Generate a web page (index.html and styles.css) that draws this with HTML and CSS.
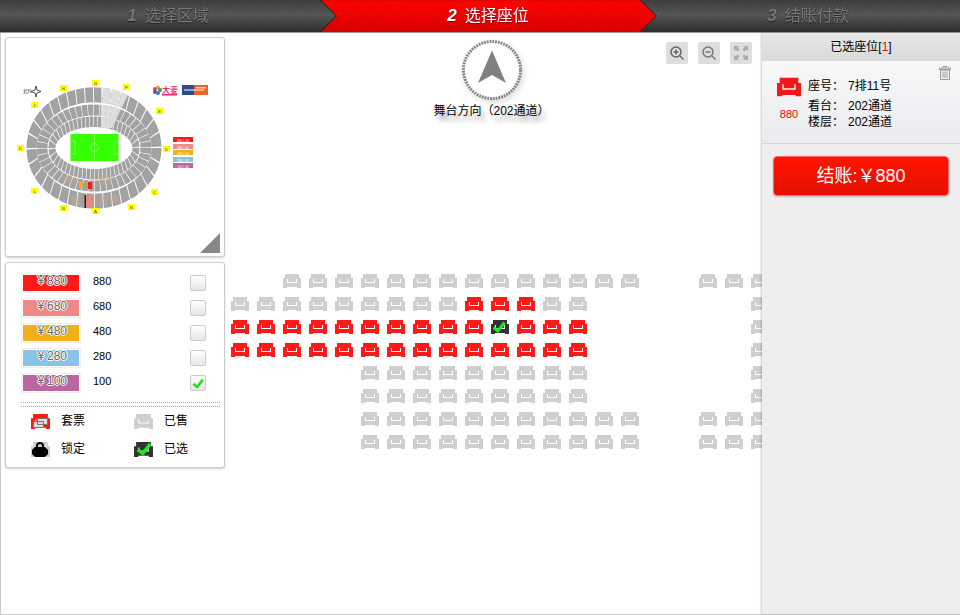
FILE: index.html
```html
<!DOCTYPE html>
<html lang="zh">
<head>
    <meta charset="UTF-8">
    <title>选择座位</title>
    <link rel="stylesheet" href="styles.css">
</head>
<body>
<svg class="defs" width="0" height="0">
    <symbol id="s" viewBox="0 0 18 14">
        <path fill-rule="evenodd" d="M2 0H16V4H18V14H14V13H4V14H0V4H2ZM4 5V9H14V5H13V8H5V5Z"/>
    </symbol>
    <symbol id="chk" viewBox="0 0 14 12">
        <path fill="none" stroke="#1ee61e" stroke-width="3" d="M1.500 6.500L6 10L12.500 1.500"/>
    </symbol>
</svg>

<div class="steps">
    <div class="step step-1"><div class="step-in"><b>1</b>选择区域</div></div>
    <div class="step step-2"><div class="step-in"><b>2</b>选择座位</div></div>
    <div class="step step-3"><div class="step-in"><b>3</b>结账付款</div></div>
</div>

<div class="main">
    <div class="side">
        <div class="card map-card">
            <svg class="stadium" viewBox="6 38 218 218" width="218" height="218">
                <defs>
                    <g id="rings" fill="none">
                        <g transform="translate(94 148) scale(1 1.5)">
                            <ellipse rx="62.5" ry="35.5" stroke-width="10" pathLength="72" stroke-dasharray="1.8 .2"/>
                            <ellipse rx="42" ry="17.5" stroke-width="7" pathLength="96" stroke-dasharray="1.7 .3"/>
                        </g>
                        <ellipse cx="94" cy="148" rx="52" ry="38" stroke-width="11" pathLength="96" stroke-dasharray="1.8 .2"/>
                    </g>
                    <clipPath id="wedge"><polygon points="101,80 135,80 112,128 101,128"/></clipPath>
                </defs>
                <use href="#rings" stroke="#a2a2a2"/>
                <use href="#rings" stroke="#dedede" clip-path="url(#wedge)"/>
                <rect x="70.5" y="134" width="48" height="27" fill="#35ff00"/>
                <g fill="none" stroke="#c8f8b0" stroke-width=".5">
                    <path d="M94.500 134V161M70.500 141H75V154H70.500M118.500 141H114V154H118.500"/>
                    <circle cx="94.500" cy="147.500" r="4"/>
                </g>
                <g fill="#c9a98a" opacity=".4">
                    <rect x="66" y="175" width="6" height="9"/><rect x="98" y="176" width="7" height="9"/>
                    <rect x="106" y="175" width="6" height="9"/><rect x="72" y="196" width="8" height="9"/>
                    <rect x="100" y="196" width="8" height="10"/><rect x="110" y="195" width="8" height="9"/>
                </g>
                <rect x="79" y="182" width="4" height="6" fill="#efb01a"/>
                <rect x="88" y="182" width="4" height="7" fill="#ff1a1a"/>
                <rect x="85" y="195" width="9" height="13" fill="#e58a80"/>
                <rect x="84.500" y="195" width="1.500" height="13" fill="#222"/>

                <g class="tags">
                    <rect x="92" y="80" width="7" height="6"/><rect x="60" y="85" width="7" height="6"/>
                    <rect x="123" y="84" width="7" height="6"/><rect x="31" y="102" width="7" height="6"/>
                    <rect x="156" y="108" width="7" height="6"/><rect x="17" y="145" width="7" height="6"/>
                    <rect x="163" y="146" width="7" height="6"/><rect x="31" y="188" width="7" height="6"/>
                    <rect x="151" y="189" width="7" height="6"/><rect x="60" y="205" width="7" height="6"/>
                    <rect x="92" y="208" width="7" height="6"/><rect x="128" y="204" width="7" height="6"/>
                </g>
                <g class="tag-text">
                    <text x="95.500" y="85">G</text><text x="63.500" y="90">H</text><text x="126.500" y="89">F</text>
                    <text x="34.500" y="107">J</text><text x="159.500" y="113">E</text><text x="20.500" y="150">K</text>
                    <text x="166.500" y="151">D</text><text x="34.500" y="193">L</text><text x="154.500" y="194">C</text>
                    <text x="63.500" y="210">B</text><text x="95.500" y="213">A</text><text x="131.500" y="209">B</text>
                </g>

                <path d="M36 86L37 90L41 91.500L37 93L36 97L35 93L31 91.500L35 90Z" fill="#fff" stroke="#222" stroke-width=".8"/>
                <text class="north" x="23" y="93">北N</text>

                <g>
                    <circle cx="155" cy="89" r="2" fill="#e83070"/><circle cx="158" cy="87.500" r="2" fill="#f0a020"/>
                    <circle cx="160" cy="90" r="2" fill="#40a040"/><circle cx="155" cy="92" r="2" fill="#8040b0"/>
                    <circle cx="158" cy="93" r="2" fill="#2080d0"/>
                </g>
                <text class="damai" x="162" y="93">大麦</text>
                <rect x="162" y="94" width="15" height="1.500" fill="#e83070"/>
                <rect x="182" y="85" width="12" height="10" fill="#2c4a8c"/>
                <rect x="194" y="85" width="14" height="10" fill="#f0622a"/>
                <rect x="196" y="87" width="10" height="1.500" fill="#fff" opacity=".7"/>
                <rect x="184" y="89" width="20" height="2" fill="#fff" opacity=".5"/>

                <g class="mini">
                    <rect x="173" y="137" width="20" height="5" fill="#ff1a1a"/>
                    <rect x="173" y="144" width="20" height="5" fill="#f08888"/>
                    <rect x="173" y="150" width="20" height="5" fill="#efb01a"/>
                    <rect x="173" y="157" width="20" height="5" fill="#8ac4e4"/>
                    <rect x="173" y="163" width="20" height="5" fill="#bb66a0"/>
                </g>
                <g class="mini-text">
                    <text x="183" y="141.500">880.00</text><text x="183" y="148.500">680.00</text>
                    <text x="183" y="154.500">480.00</text><text x="183" y="161.500">280.00</text>
                    <text x="183" y="167.500">100.00</text>
                </g>
                <path d="M200 253L220 233V253Z" fill="#888"/>
            </svg>
        </div>

        <div class="card legend-card">
            <div class="price-row">
                <span class="swatch c880">￥880</span><span class="price">880</span><span class="box"></span>
            </div>
            <div class="price-row">
                <span class="swatch c680">￥680</span><span class="price">680</span><span class="box"></span>
            </div>
            <div class="price-row">
                <span class="swatch c480">￥480</span><span class="price">480</span><span class="box"></span>
            </div>
            <div class="price-row">
                <span class="swatch c280">￥280</span><span class="price">280</span><span class="box"></span>
            </div>
            <div class="price-row">
                <span class="swatch c100">￥100</span><span class="price">100</span>
                <span class="box"><svg class="box-chk"><use href="#chk"/></svg></span>
            </div>
            <div class="dots"></div>
            <div class="key">
                <div class="key-item">
                    <span class="key-icon">
                        <svg class="seat red"><use href="#s"/></svg>
                        <svg class="tickets" viewBox="0 0 15 10"><path d="M4.500 .5H14.500V6.500H4.500ZM.5 3.500H10.500V9.500H.5Z" fill="#ddd" stroke="#777"/></svg>
                    </span>套票
                </div>
                <div class="key-item">
                    <span class="key-icon"><svg class="seat"><use href="#s"/></svg></span>已售
                </div>
                <div class="key-item">
                    <span class="key-icon">
                        <svg class="seat"><use href="#s"/></svg>
                        <svg class="lock" viewBox="0 0 16 16"><path d="M5 7V5A3 3 0 0 1 11 5V7" fill="none" stroke="#000" stroke-width="2"/><path d="M3 6H13L16 9V13L13 16H3L0 13V9Z"/></svg>
                    </span>锁定
                </div>
                <div class="key-item">
                    <span class="key-icon">
                        <svg class="seat on"><use href="#s"/></svg>
                        <svg class="key-chk"><use href="#chk"/></svg>
                    </span>已选
                </div>
            </div>
        </div>
    </div>

    <div class="canvas">
        <div class="tools">
            <span class="tool"><svg viewBox="0 0 16 16"><circle cx="7" cy="7" r="5" fill="none" stroke="#666" stroke-width="1.500"/><path d="M4.500 7H9.500M7 4.500V9.500M10.500 10.500L14.500 14.500" stroke="#666" stroke-width="1.500"/></svg></span>
            <span class="tool"><svg viewBox="0 0 16 16"><circle cx="7" cy="7" r="5" fill="none" stroke="#777" stroke-width="1.500"/><path d="M4.500 7H9.500M10.500 10.500L14.500 14.500" stroke="#777" stroke-width="1.500"/></svg></span>
            <span class="tool"><svg viewBox="0 0 16 16"><path d="M1 1H6L4.500 2.500L6.500 4.500L4.500 6.500L2.500 4.500L1 6ZM15 1V6L13.500 4.500L11.500 6.500L9.500 4.500L11.500 2.500L10 1ZM1 15V10L2.500 11.500L4.500 9.500L6.500 11.500L4.500 13.500L6 15ZM15 15H10L11.500 13.500L9.500 11.500L11.500 9.500L13.500 11.500L15 10Z" fill="#aaa"/></svg></span>
        </div>

        <div class="stage">
            <svg class="compass" viewBox="0 0 64 64" width="64" height="64">
                <circle cx="32" cy="32" r="28.500" fill="#fff" stroke="#808080" stroke-width="3" stroke-dasharray="1.800 1"/>
                <path d="M32 12.500L46 45L32 37L18 45Z" fill="#808080"/>
            </svg>
            <div class="stage-name">舞台方向（202通道）</div>
        </div>

        <div class="seats">
            <i class="skip2"></i>
            <svg class="seat"><use href="#s"/></svg><svg class="seat"><use href="#s"/></svg><svg class="seat"><use href="#s"/></svg><svg class="seat"><use href="#s"/></svg><svg class="seat"><use href="#s"/></svg><svg class="seat"><use href="#s"/></svg><svg class="seat"><use href="#s"/></svg>
            <svg class="seat"><use href="#s"/></svg><svg class="seat"><use href="#s"/></svg><svg class="seat"><use href="#s"/></svg><svg class="seat"><use href="#s"/></svg><svg class="seat"><use href="#s"/></svg><svg class="seat"><use href="#s"/></svg><svg class="seat"><use href="#s"/></svg>
            <i class="skip2"></i>
            <svg class="seat"><use href="#s"/></svg><svg class="seat"><use href="#s"/></svg><svg class="seat"><use href="#s"/></svg>

            <svg class="seat"><use href="#s"/></svg><svg class="seat"><use href="#s"/></svg><svg class="seat"><use href="#s"/></svg><svg class="seat"><use href="#s"/></svg><svg class="seat"><use href="#s"/></svg><svg class="seat"><use href="#s"/></svg><svg class="seat"><use href="#s"/></svg>
            <svg class="seat"><use href="#s"/></svg><svg class="seat"><use href="#s"/></svg>
            <svg class="seat red"><use href="#s"/></svg><svg class="seat red"><use href="#s"/></svg><svg class="seat red"><use href="#s"/></svg>
            <svg class="seat"><use href="#s"/></svg><svg class="seat"><use href="#s"/></svg>
            <i class="skip6"></i>
            <svg class="seat"><use href="#s"/></svg>

            <svg class="seat red"><use href="#s"/></svg><svg class="seat red"><use href="#s"/></svg><svg class="seat red"><use href="#s"/></svg><svg class="seat red"><use href="#s"/></svg><svg class="seat red"><use href="#s"/></svg><svg class="seat red"><use href="#s"/></svg><svg class="seat red"><use href="#s"/></svg>
            <svg class="seat red"><use href="#s"/></svg><svg class="seat red"><use href="#s"/></svg><svg class="seat red"><use href="#s"/></svg>
            <span class="picked"><svg class="seat on"><use href="#s"/></svg><svg class="seat-chk"><use href="#chk"/></svg></span>
            <svg class="seat red"><use href="#s"/></svg><svg class="seat red"><use href="#s"/></svg><svg class="seat red"><use href="#s"/></svg>
            <i class="skip6"></i>
            <svg class="seat"><use href="#s"/></svg>

            <svg class="seat red"><use href="#s"/></svg><svg class="seat red"><use href="#s"/></svg><svg class="seat red"><use href="#s"/></svg><svg class="seat red"><use href="#s"/></svg><svg class="seat red"><use href="#s"/></svg><svg class="seat red"><use href="#s"/></svg><svg class="seat red"><use href="#s"/></svg>
            <svg class="seat red"><use href="#s"/></svg><svg class="seat red"><use href="#s"/></svg><svg class="seat red"><use href="#s"/></svg><svg class="seat red"><use href="#s"/></svg><svg class="seat red"><use href="#s"/></svg><svg class="seat red"><use href="#s"/></svg><svg class="seat red"><use href="#s"/></svg>
            <i class="skip6"></i>
            <svg class="seat"><use href="#s"/></svg>

            <i class="skip5"></i>
            <svg class="seat"><use href="#s"/></svg><svg class="seat"><use href="#s"/></svg><svg class="seat"><use href="#s"/></svg><svg class="seat"><use href="#s"/></svg><svg class="seat"><use href="#s"/></svg><svg class="seat"><use href="#s"/></svg><svg class="seat"><use href="#s"/></svg><svg class="seat"><use href="#s"/></svg><svg class="seat"><use href="#s"/></svg>
            <i class="skip6"></i>
            <svg class="seat"><use href="#s"/></svg>

            <i class="skip5"></i>
            <svg class="seat"><use href="#s"/></svg><svg class="seat"><use href="#s"/></svg><svg class="seat"><use href="#s"/></svg><svg class="seat"><use href="#s"/></svg><svg class="seat"><use href="#s"/></svg><svg class="seat"><use href="#s"/></svg><svg class="seat"><use href="#s"/></svg><svg class="seat"><use href="#s"/></svg><svg class="seat"><use href="#s"/></svg>
            <i class="skip6"></i>
            <svg class="seat"><use href="#s"/></svg>

            <i class="skip5"></i>
            <svg class="seat"><use href="#s"/></svg><svg class="seat"><use href="#s"/></svg><svg class="seat"><use href="#s"/></svg><svg class="seat"><use href="#s"/></svg><svg class="seat"><use href="#s"/></svg><svg class="seat"><use href="#s"/></svg><svg class="seat"><use href="#s"/></svg><svg class="seat"><use href="#s"/></svg><svg class="seat"><use href="#s"/></svg><svg class="seat"><use href="#s"/></svg><svg class="seat"><use href="#s"/></svg>
            <i class="skip2"></i>
            <svg class="seat"><use href="#s"/></svg><svg class="seat"><use href="#s"/></svg><svg class="seat"><use href="#s"/></svg>

            <i class="skip5"></i>
            <svg class="seat"><use href="#s"/></svg><svg class="seat"><use href="#s"/></svg><svg class="seat"><use href="#s"/></svg><svg class="seat"><use href="#s"/></svg><svg class="seat"><use href="#s"/></svg><svg class="seat"><use href="#s"/></svg><svg class="seat"><use href="#s"/></svg><svg class="seat"><use href="#s"/></svg><svg class="seat"><use href="#s"/></svg><svg class="seat"><use href="#s"/></svg><svg class="seat"><use href="#s"/></svg>
            <i class="skip2"></i>
            <svg class="seat"><use href="#s"/></svg><svg class="seat"><use href="#s"/></svg><svg class="seat"><use href="#s"/></svg>
        </div>
    </div>

    <div class="cart">
        <div class="cart-title">已选座位[<em>1</em>]</div>
        <div class="cart-item">
            <svg class="trash" viewBox="0 0 12 14"><path d="M4 1.500V.5H8V1.500M.5 2H11.500V3.500H.5ZM1.500 4H10.500V13.500H1.500ZM4 5.500V12M6 5.500V12M8 5.500V12" fill="none" stroke="#999"/></svg>
            <div class="item-seat">
                <svg class="big-seat"><use href="#s"/></svg>
                <span>880</span>
            </div>
            <div class="item-info">
                <div class="info-first"><span>座号：</span>7排11号</div>
                <div><span>看台：</span>202通道</div>
                <div><span>楼层：</span>202通道</div>
            </div>
        </div>
        <div class="pay">结账:￥880</div>
    </div>
</div>
</body>
</html>
```

FILE: styles.css
```css
*{
    margin: 0;
    padding: 0;
    box-sizing: border-box;
}
html,body{
    height: 615px;
    overflow: hidden;
}
body{
    background: #fff;
    color: #000;
    font: 12px/16px "Liberation Sans","Noto Sans CJK SC",sans-serif;
}
.defs{
    position: absolute;
}
/* top steps */
.steps{
    display: flex;
    height: 33px;
    overflow: hidden;
    background: #999;
    padding-bottom: 1px;
}
.step{
    flex: none;
    width: 336px;
    margin-right: -16px;
    filter: drop-shadow(1px 0 0 #1a1a1a);
}
.step-1{
    position: relative;
    z-index: 3;
}
.step-2{
    position: relative;
    z-index: 2;
}
.step-in{
    height: 32px;
    line-height: 32px;
    font-size: 16px;
    text-align: center;
    color: #777;
    text-shadow: 0 1px 1px #222;
    clip-path: polygon(0 0, 320px 0, 336px 16px, 320px 32px, 0 32px);
    background:
        repeating-linear-gradient(135deg, rgba(255,255,255,.025) 0 1px, rgba(0,0,0,.025) 1px 3px),
        linear-gradient(#3c3c3c, #555 45%, #2c2c2c);
}
.step-in b{
    font-size: 17px;
    font-style: italic;
    margin-right: 8px;
}
.step-2 .step-in{
    color: #fff;
    text-shadow: 0 1px 1px #800;
    background:
        repeating-linear-gradient(135deg, rgba(255,255,255,.02) 0 1px, rgba(0,0,0,.02) 1px 3px),
        linear-gradient(#e00000 0, #ff0000 2px, #f00000 50%, #d80000);
}
.main{
    display: flex;
    height: 582px;
    border-left: 1px solid #ccc;
    border-bottom: 1px solid #ccc;
}
/* left cards */
.side{
    flex: none;
    width: 230px;
    padding: 4px 5px 0 4px;
}
.card{
    width: 220px;
    background: #fff;
    border: 1px solid #ccc;
    border-radius: 3px;
    box-shadow: 0 1px 2px rgba(0,0,0,.2);
}
.map-card{
    height: 220px;
}
.stadium{
    display: block;
    filter: blur(.4px);
}
.tags{
    fill: #ffff00;
}
.tag-text{
    font-size: 4px;
    text-anchor: middle;
    fill: #333;
}
.north{
    font-size: 5px;
    fill: #444;
}
.damai{
    font-size: 8px;
    font-weight: bold;
    fill: #e83070;
}
.mini-text{
    font-size: 4px;
    text-anchor: middle;
    fill: #fff;
    opacity: .8;
}
.legend-card{
    height: 206px;
    margin-top: 5px;
    padding: 10px 18px 0 15px;
}
.price-row{
    display: flex;
    align-items: center;
    height: 20px;
    margin-bottom: 5px;
}
.swatch{
    width: 60px;
    height: 20px;
    border: 1px solid #eee;
    outline: 1px solid #fff;
    outline-offset: -2px;
    text-align: center;
    line-height: 15px;
    color: #666;
    text-shadow: 1px 0 0 #fff, -1px 0 0 #fff, 0 1px 0 #fff, 0 -1px 0 #fff;
}
.c880{ background: #ff1a1a; }
.c680{ background: #f08888; }
.c480{ background: #efb01a; }
.c280{ background: #8ac4e4; }
.c100{ background: #bb66a0; }
.price{
    margin: 0 0 4px 12px;
    font-size: 11px;
}
.box{
    display: flex;
    align-items: center;
    justify-content: center;
    width: 16px;
    height: 16px;
    margin-left: auto;
    border: 1px solid #ccc;
    border-radius: 2px;
    background: linear-gradient(#fff, #e6e6e6);
}
.box-chk{
    width: 12px;
    height: 11px;
}
.dots{
    height: 5px;
    width: 199px;
    margin-top: 9px;
    border-top: 1px dotted #aaa;
    border-bottom: 1px dotted #aaa;
}
.key{
    display: grid;
    grid-template-columns: 103px 96px;
    grid-auto-rows: 28px;
    padding: 0 0 0 10px;
}
.key-item{
    display: flex;
    align-items: center;
}
.key-icon{
    position: relative;
    width: 20px;
    height: 15px;
    margin-right: 10px;
}
.key-icon .seat{
    width: 19px;
    height: 15px;
}
.tickets{
    position: absolute;
    left: 2px;
    top: 4px;
    width: 15px;
    height: 10px;
}
.lock{
    position: absolute;
    left: 1px;
    top: -1px;
    width: 16px;
    height: 16px;
}
.key-chk{
    position: absolute;
    left: 2px;
    top: 0;
    width: 16px;
    height: 14px;
}
/* seat map */
.canvas{
    position: relative;
    flex: 1;
    min-width: 0;
    overflow: hidden;
}
.tools{
    position: absolute;
    top: 9px;
    right: 10px;
    display: flex;
    gap: 10px;
}
.tool{
    display: flex;
    align-items: center;
    justify-content: center;
    width: 22px;
    height: 22px;
    background: #ddd;
    border-radius: 2px;
}
.tool svg{
    width: 16px;
    height: 16px;
}
.stage{
    display: flex;
    flex-direction: column;
    align-items: center;
    height: 241px;
    padding: 5px 10px 0 0;
}
.compass{
    display: block;
    filter: drop-shadow(2px 3px 3px rgba(0,0,0,.15));
}
.stage-name{
    margin-top: 1px;
    text-shadow: 4px 6px 4px #aaa;
}
.seats{
    display: grid;
    grid-template-columns: repeat(21, 18px);
    grid-auto-rows: 14px;
    gap: 9px 8px;
    width: 560px;
}
.seat{
    display: block;
    width: 18px;
    height: 14px;
    fill: #cfcfcf;
}
.seat.red{
    fill: #ff1a1a;
}
.seat.on{
    fill: #333;
}
.skip2{ grid-column: span 2; }
.skip5{ grid-column: span 5; }
.skip6{ grid-column: span 6; }
.picked{
    position: relative;
    display: block;
}
.seat-chk{
    position: absolute;
    left: 1px;
    top: 1px;
    width: 14px;
    height: 12px;
}
/* right panel */
.cart{
    flex: none;
    width: 198px;
    background: #eee;
    box-shadow: -1px 0 2px rgba(0,0,0,.2);
    position: relative;
}
.cart-title{
    height: 28px;
    line-height: 28px;
    text-align: center;
    background: linear-gradient(#e8e8e8, #d9d9d9);
}
.cart-title em{
    color: #f00;
    font-style: normal;
}
.cart-item{
    position: relative;
    display: flex;
    height: 83px;
    padding: 16px 0 0 15px;
    border-bottom: 1px solid #d6d6d6;
    background: linear-gradient(#f8f8f8, #e9ebef);
}
.trash{
    position: absolute;
    right: 9px;
    top: 5px;
    width: 12px;
    height: 14px;
}
.item-seat{
    width: 31px;
    color: #f00;
    font-size: 11px;
}
.big-seat{
    display: block;
    width: 24px;
    height: 20px;
    margin-bottom: 9px;
    fill: #f01818;
}
.item-seat span{
    display: block;
    width: 24px;
    text-align: center;
}
.item-info{
    padding-top: 1px;
}
.item-info span{
    display: inline-block;
    width: 40px;
}
.info-first{
    margin-bottom: 4px;
}
.pay{
    height: 40px;
    margin: 12px 11px 0;
    line-height: 38px;
    text-align: center;
    color: #fff;
    font-size: 18px;
    border: 1px solid #f66;
    border-radius: 4px;
    background: linear-gradient(#ff1500, #e60f00);
    box-shadow: 0 1px 2px rgba(0,0,0,.2);
}
```
